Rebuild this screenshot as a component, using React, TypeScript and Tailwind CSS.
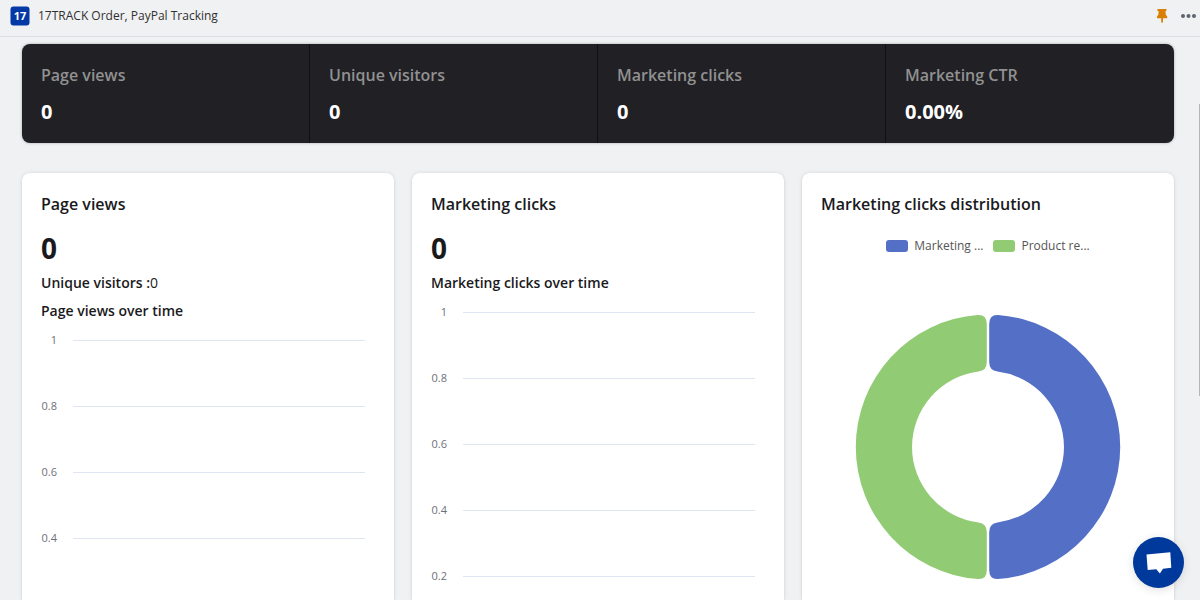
import type { ReactNode } from 'react'

const stats = [
  { label: 'Page views', value: '0' },
  { label: 'Unique visitors', value: '0' },
  { label: 'Marketing clicks', value: '0' },
  { label: 'Marketing CTR', value: '0.00%' },
]

const halfRing =
  'M1.2 -123 Q1.2 -132.6 10 -132.1 A132.5 132.5 0 0 1 10 132.1 Q1.2 132.6 1.2 123 V85 Q1.2 76.5 9.5 75.4 A76 76 0 0 0 9.5 -75.4 Q1.2 -76.5 1.2 -85 Z'

function Header() {
  return (
    <header className="flex h-[37px] shrink-0 items-center border-b border-[#dcdfe6] pr-1 pb-1 pl-2.5">
      <svg width="20" height="20" viewBox="0 0 20 20" className="shrink-0">
        <rect x="0.5" y="0.5" width="19" height="19" rx="3" fill="#0339a6" />
        <text x="10" y="14" textAnchor="middle" fontSize="11" fontWeight="700" fill="#fff">
          17
        </text>
      </svg>
      <h1 className="ml-2 flex-1 text-xs text-[#303030]">17TRACK Order, PayPal Tracking</h1>
      <button aria-label="Unpin app" className="mr-3">
        <svg width="12" height="14" viewBox="0 0 12 14" fill="#d97f06">
          <path d="M2 0h8q.6 0 .6.8T10 2.200H9.400L9.800 5.800 11.200 7.400V9.200H7V13.500H5.200V9.200H1V7.400L2.300 5.800 2.700 2.200H2q-.7-.5-.7-1.300T2 0z" />
        </svg>
      </button>
      <button aria-label="More actions">
        <svg width="16" height="4" viewBox="0 0 16 4" fill="#5c6470">
          <circle cx="3" cy="2" r="2" />
          <circle cx="8.500" cy="2" r="2" />
          <circle cx="14" cy="2" r="2" />
        </svg>
      </button>
    </header>
  )
}

function Card({ title, children }: { title: string; children: ReactNode }) {
  return (
    <section className="rounded-t-lg bg-white px-[19px] pt-[19px] shadow-[0_0_4px_rgba(23,24,24,0.1),0_1px_2px_rgba(0,0,0,0.08)]">
      <h2 className="text-base leading-6 font-semibold">{title}</h2>
      {children}
    </section>
  )
}

function LineChart({ ticks }: { ticks: string[] }) {
  return (
    <div className="mt-[11px] mr-2.5 flex flex-col gap-[50px]">
      {ticks.map(tick => (
        <div key={tick} className="flex h-4 items-center">
          <span className="w-4 text-right text-[11px] leading-4 text-[#6e7079]">{tick}</span>
          <span className="ml-4 h-px flex-1 bg-[#e0e6f1]" />
        </div>
      ))}
    </div>
  )
}

function Legend({ color, label }: { color: string; label: string }) {
  return (
    <li className="flex items-center gap-1.5">
      <span className={`h-3 w-[22px] rounded-[3px] ${color}`} />
      {label}
    </li>
  )
}

export default function App() {
  return (
    <div className="relative flex h-screen flex-col overflow-hidden bg-[#f0f1f3] font-['Open_Sans','Noto_Sans',sans-serif] text-[#1a1a1d]">
      <Header />

      <main className="flex min-h-0 flex-1 flex-col pt-[7px] pr-[26px] pl-[22px]">
        <dl className="grid shrink-0 grid-cols-4 divide-x divide-[#101013] overflow-hidden rounded-lg bg-[#202025] shadow-[0_0_3px_rgba(0,0,0,0.3)]">
          {stats.map(stat => (
            <div key={stat.label} className="px-[19px] pt-[19px] pb-[17px]">
              <dt className="text-base leading-6 font-semibold text-[#919191]">{stat.label}</dt>
              <dd className="mt-[11px] text-xl leading-7 font-bold text-white">{stat.value}</dd>
            </div>
          ))}
        </dl>

        <div className="mt-[30px] grid flex-1 grid-cols-3 gap-[18px]">
          <Card title="Page views">
            <p className="mt-3 text-[28px] leading-10 font-bold">0</p>
            <p className="mt-[5px] text-sm leading-5">
              <strong className="font-semibold">Unique visitors :</strong>0
            </p>
            <h3 className="mt-2 text-sm leading-5 font-semibold">Page views over time</h3>
            <LineChart ticks={['1', '0.8', '0.6', '0.4']} />
          </Card>

          <Card title="Marketing clicks">
            <p className="mt-3 text-[28px] leading-10 font-bold">0</p>
            <h3 className="mt-[5px] text-sm leading-5 font-semibold">Marketing clicks over time</h3>
            <LineChart ticks={['1', '0.8', '0.6', '0.4', '0.2']} />
          </Card>

          <Card title="Marketing clicks distribution">
            <ul className="mt-5 flex justify-center gap-2.5 text-xs leading-5 text-[#555]">
              <Legend color="bg-[#5470c6]" label="Marketing ..." />
              <Legend color="bg-[#91cc75]" label="Product re..." />
            </ul>
            <svg viewBox="-134 -134 268 268" className="mx-auto mt-[57px] w-[268px]">
              <path d={halfRing} fill="#5470c6" />
              <path d={halfRing} fill="#91cc75" transform="scale(-1 1)" />
            </svg>
          </Card>
        </div>
      </main>

      {/* scroll thumb */}
      <div className="absolute top-[104px] right-0 h-[292px] w-px bg-[#b5b5b5]" />

      <button
        aria-label="Open chat"
        className="absolute right-4 bottom-3 flex size-[51px] items-center justify-center rounded-full bg-[#00399c] shadow-[0_2px_10px_rgba(0,0,0,0.12)]"
      >
        <svg width="26" height="22" viewBox="0 0 26 22" fill="#fff">
          <path d="M.5 2.500 24.300.3 25.300 15.800 17 16.700 13.900 21.400 10.300 17.300 1.700 18z" />
        </svg>
      </button>
    </div>
  )
}
